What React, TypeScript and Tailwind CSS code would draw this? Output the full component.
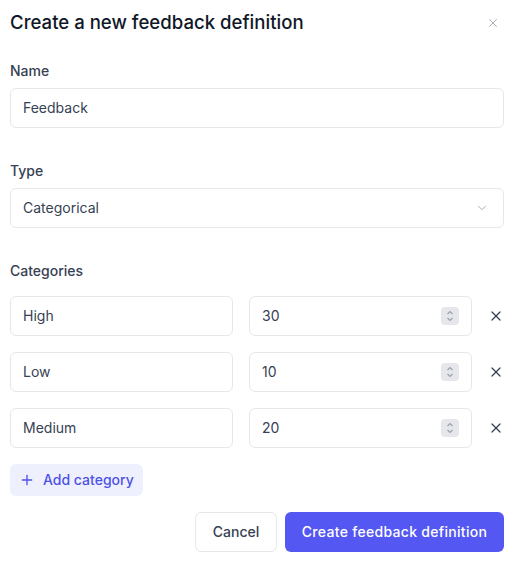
import { ChevronDown, Plus, X } from "lucide-react";

const categories = [
  { name: "High", value: "30" },
  { name: "Low", value: "10" },
  { name: "Medium", value: "20" },
];

function Spinner() {
  return (
    <div className="w-[18px] h-[18px] bg-[#e5e7eb] rounded-sm flex flex-col items-center justify-center text-gray-400">
      <svg width="8" height="14" viewBox="0 0 8 14" fill="none" stroke="currentColor" strokeWidth="1.2">
        <path d="M1.5 5L4 2.5L6.5 5" />
        <path d="M1.5 9L4 11.5L6.5 9" />
      </svg>
    </div>
  );
}

export default function App() {
  return (
    <div className="w-[527px] h-[561px] bg-white font-['Inter',sans-serif] text-gray-700">
      <div className="w-[494px] ml-[10px] pt-[9px]">
        {/* Header */}
        <div className="flex items-center justify-between">
          <h2 className="text-[18.6px] font-medium text-gray-900">Create a new feedback definition</h2>
          <button className="text-gray-400 mr-[4px]">
            <X size={14} strokeWidth={1.5} />
          </button>
        </div>

        {/* Name */}
        <div className="mt-[24px]">
          <label className="block text-sm font-medium text-gray-700 leading-5">Name</label>
          <div className="mt-[7px] h-10 border border-gray-200 rounded-md flex items-center px-3 pt-px text-sm text-gray-700">
            Feedback
          </div>
        </div>

        {/* Type */}
        <div className="mt-[33px]">
          <label className="block text-sm font-medium text-gray-700 leading-5">Type</label>
          <div className="mt-[7px] h-10 border border-gray-200 rounded-md flex items-center justify-between px-3 pt-px text-sm text-gray-700">
            <span>Categorical</span>
            <ChevronDown size={14} strokeWidth={1.5} className="text-gray-400 mr-[2px]" />
          </div>
        </div>

        {/* Categories */}
        <div className="mt-[33px]">
          <label className="block text-sm font-medium text-gray-700 leading-5">Categories</label>
          <div className="mt-[15px] flex flex-col gap-4">
            {categories.map((c) => (
              <div key={c.name} className="flex items-center gap-4">
                <div className="flex-1 h-10 border border-gray-200 rounded-md flex items-center px-3 pt-px text-sm text-gray-700">
                  {c.name}
                </div>
                <div className="flex-1 h-10 border border-gray-200 rounded-md flex items-center justify-between pl-3 pr-[12px] pt-px text-sm text-gray-700">
                  <span>{c.value}</span>
                  <Spinner />
                </div>
                <button className="w-4 flex justify-center text-gray-700">
                  <X size={16} strokeWidth={1.8} />
                </button>
              </div>
            ))}
          </div>
        </div>

        {/* Add category */}
        <button className="mt-4 h-8 px-[9px] rounded-md bg-[#eef0fe] text-[#4f52e6] text-sm font-medium flex items-center gap-2">
          <Plus size={16} strokeWidth={2} />
          Add category
        </button>

        {/* Footer */}
        <div className="mt-4 flex justify-end gap-2">
          <button className="h-10 w-[82px] border border-gray-200 rounded-md text-sm font-medium text-gray-700">
            Cancel
          </button>
          <button className="h-10 w-[219px] rounded-md bg-[#5457f2] text-sm font-medium tracking-[0.3px] text-white">
            Create feedback definition
          </button>
        </div>
      </div>
    </div>
  );
}
